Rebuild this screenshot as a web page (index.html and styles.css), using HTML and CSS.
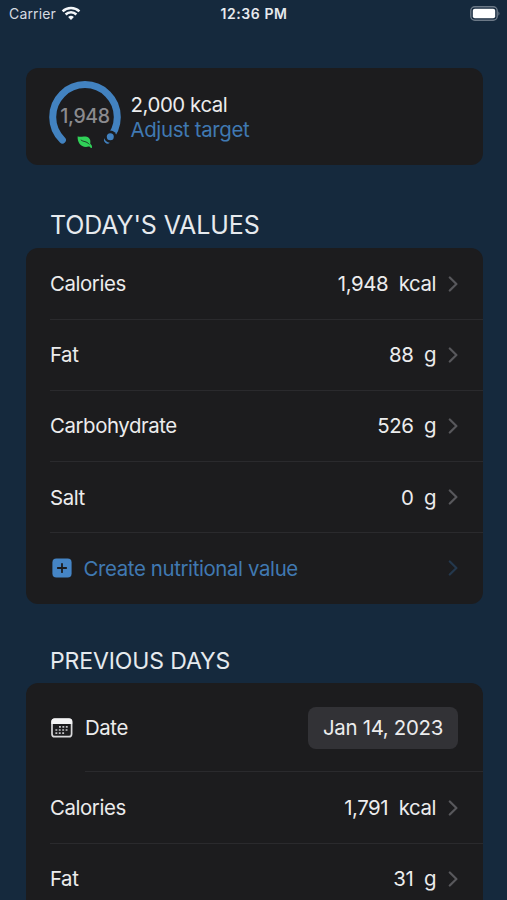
FILE: index.html
```html
<!DOCTYPE html>
<html lang="en">
<head>
  <meta charset="utf-8">
  <title>Nutrition</title>
  <link rel="stylesheet" href="styles.css">
</head>
<body>
  <svg class="sprite" width="0" height="0">
    <symbol id="chevron" viewBox="0 0 10 16">
      <path d="M1.8 1.5 L8.4 8 L1.8 14.5" />
    </symbol>
  </svg>

  <header class="status-bar">
    <div class="carrier">
      <span class="carrier-name">Carrier</span>
      <svg class="wifi" width="20" height="15" viewBox="0 0 20 15">
        <path d="M1.6 5.3 A12.2 12.2 0 0 1 18.4 5.3" />
        <path d="M4.6 8.5 A7.8 7.8 0 0 1 15.4 8.5" />
        <path class="wifi-dot" d="M10 14 L7.1 11.1 A4.1 4.1 0 0 1 12.9 11.1 Z" />
      </svg>
    </div>
    <div class="clock">12:36 PM</div>
    <div class="battery">
      <svg width="31" height="15" viewBox="0 0 31 15">
        <rect x="0.8" y="0.8" width="26.4" height="13.4" rx="4" class="battery-case" />
        <rect x="2.8" y="2.8" width="22.4" height="9.4" rx="2" class="battery-level" />
        <path d="M28.4 5.2 Q30.6 7.5 28.4 9.8 Z" class="battery-cap" />
      </svg>
    </div>
  </header>

  <main>
    <section class="card target">
      <div class="gauge">
        <svg width="72" height="72" viewBox="0 0 72 72">
          <path class="gauge-ring" d="M13.4 59 A32.3 32.3 0 1 1 58.6 59" />
          <circle class="gauge-gap" cx="61.3" cy="55.7" r="6.2" />
          <circle class="gauge-dot" cx="61.3" cy="55.7" r="3.5" />
          <path class="leaf" d="M28.7 55.2 C31 56.6 33 55 36.6 55.6 C40.4 56.2 42.1 59 41.2 62.6 C41.6 63.9 43.4 64.3 43 66.4 C42.7 67.2 41.5 67.2 41.2 66.3 C40.9 65.2 40.3 65.3 39.4 65.6 C32.4 67.3 28 61.5 28.7 55.2 Z" />
          <path class="leaf-vein" d="M31.8 58.8 C34.4 61.2 37.4 59.8 40.3 63.4" />
        </svg>
        <span class="gauge-value">1,948</span>
      </div>
      <div class="target-text">
        <div class="target-kcal">2,000 kcal</div>
        <a class="target-link">Adjust target</a>
      </div>
    </section>

    <h2 class="today">TODAY'S VALUES</h2>
    <ul class="card list">
      <li class="row">
        <span class="label">Calories</span>
        <span class="value">1,948</span><span class="unit">kcal</span>
        <svg class="chevron"><use href="#chevron" /></svg>
      </li>
      <li class="row">
        <span class="label">Fat</span>
        <span class="value">88</span><span class="unit">g</span>
        <svg class="chevron"><use href="#chevron" /></svg>
      </li>
      <li class="row">
        <span class="label">Carbohydrate</span>
        <span class="value">526</span><span class="unit">g</span>
        <svg class="chevron"><use href="#chevron" /></svg>
      </li>
      <li class="row">
        <span class="label">Salt</span>
        <span class="value">0</span><span class="unit">g</span>
        <svg class="chevron"><use href="#chevron" /></svg>
      </li>
      <li class="row create">
        <svg class="plus" width="20" height="20" viewBox="0 0 20 20">
          <rect x="0.4" y="0.4" width="19.2" height="19.2" rx="4" />
          <path d="M10 5.8 V14.2 M5.8 10 H14.2" />
        </svg>
        <span class="label">Create nutritional value</span>
        <svg class="chevron"><use href="#chevron" /></svg>
      </li>
    </ul>

    <h2 class="previous">PREVIOUS DAYS</h2>
    <ul class="card list days">
      <li class="row date">
        <svg class="calendar" width="22" height="20" viewBox="0 0 22 20">
          <rect x="1" y="1.1" width="19.6" height="17.6" rx="2.8" class="calendar-box" />
          <path d="M0.4 6 V3.6 Q0.4 0.4 3.6 0.4 H18 Q21.2 0.4 21.2 3.6 V6 Z" class="calendar-top" />
          <path d="M8 8.8 H18 M4.4 12 H18 M4.4 15.2 H14.5" class="calendar-days" />
        </svg>
        <span class="label">Date</span>
        <button class="date-button">Jan 14, 2023</button>
      </li>
      <li class="row">
        <span class="label">Calories</span>
        <span class="value">1,791</span><span class="unit">kcal</span>
        <svg class="chevron"><use href="#chevron" /></svg>
      </li>
      <li class="row">
        <span class="label">Fat</span>
        <span class="value">31</span><span class="unit">g</span>
        <svg class="chevron"><use href="#chevron" /></svg>
      </li>
    </ul>
  </main>
</body>
</html>
```

FILE: styles.css
```css
* {
  box-sizing: border-box;
}

body {
  margin: 0;
  height: 900px;
  overflow: hidden;
  background-color: #15293d;
  color: #ececed;
  font-family: Inter, sans-serif;
  font-size: 20.4px;
  letter-spacing: -0.42px;
}

.sprite {
  position: absolute;
}

.status-bar {
  display: grid;
  grid-template-columns: 1fr auto 1fr;
  align-items: center;
  height: 27px;
  padding: 0 6px 0 9px;
  font-size: 14px;
}

.carrier {
  display: flex;
  align-items: center;
  gap: 5px;
  color: #d5dbe1;
  letter-spacing: 0.15px;
}

.wifi {
  fill: none;
  stroke: #f4f7fa;
  stroke-width: 2.5;
}

.wifi .wifi-dot {
  fill: #f4f7fa;
  stroke: none;
}

.clock {
  margin-right: 2px;
  font-weight: 600;
  letter-spacing: 0.6px;
  color: #e6eaee;
}

.battery {
  display: flex;
  justify-content: flex-end;
}

.battery-case {
  fill: none;
  stroke: #6c7987;
  stroke-width: 1.4;
}

.battery-level {
  fill: white;
}

.battery-cap {
  fill: #6c7987;
}

main {
  padding: 41px 24.5px 0 25.5px;
}

.card {
  margin: 0;
  padding: 0;
  background-color: #1c1c1e;
  border-radius: 12px;
}

.target {
  display: flex;
  align-items: center;
  height: 97px;
  padding-left: 23.5px;
}

.gauge {
  display: grid;
  place-items: center;
  width: 72px;
  height: 72px;
}

.gauge > * {
  grid-area: 1 / 1;
}

.gauge-ring {
  fill: none;
  stroke: #4282c0;
  stroke-width: 7;
  stroke-linecap: round;
}

.gauge-gap {
  fill: #1c1c1e;
}

.gauge-dot {
  fill: #4282c0;
}

.gauge-value {
  margin-top: -2px;
  color: #8b8b8f;
  font-size: 19.5px;
  font-weight: 500;
  letter-spacing: -0.3px;
}

.leaf {
  fill: #30d158;
}

.leaf-vein {
  fill: none;
  stroke: #1c1c1e;
  stroke-width: 0.8;
}

.target-text {
  padding: 1px 0 0 9.5px;
  line-height: 25px;
}

.target-link {
  color: #4079b2;
  letter-spacing: -0.35px;
}

h2 {
  margin: 0 0 0 24.5px;
  color: #e6eaee;
  font-weight: 400;
}

.today {
  padding-top: 43px;
  height: 83px;
  font-size: 25px;
  line-height: 34px;
  letter-spacing: -0.12px;
}

.previous {
  padding-top: 40.5px;
  height: 79.5px;
  font-size: 23px;
  line-height: 34px;
  letter-spacing: -0.12px;
}

.list {
  list-style: none;
}

.days {
  height: 240px;
}

.row {
  position: relative;
  display: flex;
  align-items: center;
  height: 71.2px;
  padding: 0 24.5px 0 24.5px;
}

.row + .row::before {
  content: "";
  position: absolute;
  top: -0.5px;
  left: 24.5px;
  right: 0;
  height: 1px;
  background-color: #2a2a2d;
}

.label {
  flex: 1;
}

.unit {
  margin-left: 10.5px;
}

.chevron {
  width: 10px;
  height: 16px;
  margin-left: 12px;
  fill: none;
  stroke: #58585c;
  stroke-width: 2.2;
  stroke-linecap: round;
  stroke-linejoin: round;
}

.create .label {
  color: #4079b2;
  letter-spacing: -0.37px;
}

.create .chevron {
  stroke: #24384d;
}

.plus {
  margin-right: 12px;
  margin-left: 1.5px;
  fill: #4585c6;
}

.plus path {
  stroke: #1c1c1e;
  stroke-width: 1.8;
  stroke-linecap: round;
}

.date {
  height: 88.5px;
}

.row.date + .row::before {
  left: 59px;
}

.calendar {
  margin: 0 12px 0 1px;
}

.calendar-box {
  fill: none;
  stroke: #d8d8da;
  stroke-width: 1.7;
}

.calendar-top {
  fill: #f4f4f5;
}

.calendar-days {
  fill: none;
  stroke: #c4c4c7;
  stroke-width: 1.7;
  stroke-dasharray: 1.9 1.5;
}

.date-button {
  width: 150px;
  height: 42px;
  padding: 0;
  border: 0;
  border-radius: 8px;
  background-color: #323236;
  color: #ececed;
  font: inherit;
  letter-spacing: -0.3px;
}
```
